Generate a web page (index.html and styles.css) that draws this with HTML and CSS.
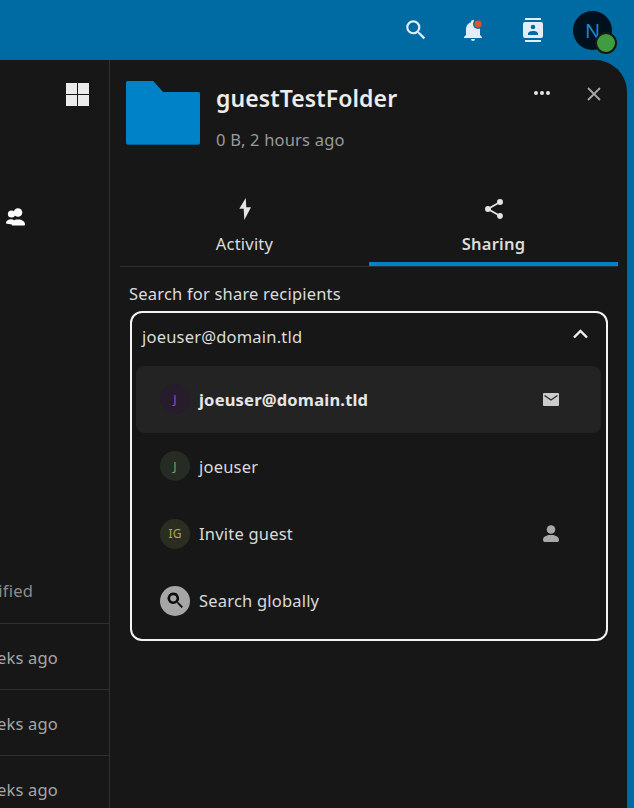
FILE: index.html
```html
<!DOCTYPE html>
<html lang="en">
<head>
<meta charset="utf-8">
<title>guestTestFolder</title>
<link rel="stylesheet" href="styles.css">
</head>
<body>
<header class="topbar">
  <svg class="icon-search" viewBox="0 0 24 24"><path d="M9.5,3A6.5,6.5 0 0,1 16,9.5C16,11.11 15.41,12.59 14.44,13.73L14.71,14H15.5L20.5,19L19,20.5L14,15.5V14.71L13.73,14.44C12.59,15.41 11.11,16 9.5,16A6.5,6.5 0 0,1 3,9.5A6.5,6.5 0 0,1 9.5,3M9.5,5C7,5 5,7 5,9.5C5,12 7,14 9.5,14C12,14 14,12 14,9.5C14,7 12,5 9.5,5Z"/></svg>
  <svg class="icon-bell" viewBox="0 0 24 24"><path d="M21,19V20H3V19L5,17V11C5,7.9 7.03,5.17 10,4.29C10,4.19 10,4.1 10,4A2,2 0 0,1 12,2A2,2 0 0,1 14,4C14,4.1 14,4.19 14,4.29C16.97,5.17 19,7.9 19,11V17L21,19M14,21A2,2 0 0,1 12,23A2,2 0 0,1 10,21"/><circle class="bell-gap" cx="17" cy="6" r="5"/><circle class="bell-dot" cx="17" cy="6" r="3.5"/></svg>
  <svg class="icon-contacts" viewBox="0 0 24 24"><path d="M20,0H4V2H20V0M4,24H20V22H4V24M20,4H4A2,2 0 0,0 2,6V18A2,2 0 0,0 4,20H20A2,2 0 0,0 22,18V6A2,2 0 0,0 20,4M12,6.75A2.25,2.25 0 0,1 14.25,9A2.25,2.25 0 0,1 12,11.25A2.25,2.25 0 0,1 9.75,9A2.25,2.25 0 0,1 12,6.75M17,17H7V15.5C7,13.83 10.33,13 12,13C13.67,13 17,13.83 17,15.5V17Z"/></svg>
  <div class="account">N<span class="status"></span></div>
</header>
<main class="panel">
  <section class="files">
    <div class="grid-toggle"><span></span><span></span><span></span><span></span></div>
    <div class="shared-mark">
      <svg viewBox="0 0 19 18"><circle cx="5.5" cy="6" r="3.6"/><path d="M0 15.5c0-3 2.5-3.6 4-4.2l3 .2 1.5 1.5v2.8c-3 .6-5.5.6-8.500-.3z"/><circle cx="12" cy="4.500" r="4.300"/><path d="M5.500 16.500c0-3.500 3-4.300 4.500-5h4c1.500.7 5 1.500 5 5 0 1-1 1-2 1H7.500c-1 0-2 0-2-1z"/></svg>
    </div>
    <div class="file-row file-head"><span>Modified</span></div>
    <div class="file-row"><span>3 weeks ago</span></div>
    <div class="file-row"><span>3 weeks ago</span></div>
    <div class="file-row"><span>3 weeks ago</span></div>
  </section>
  <aside class="sidebar">
    <div class="side-head">
      <svg class="folder" viewBox="0 0 74 64"><path class="folder-shade" d="M2 0h25l10 11h35a2 2 0 0 1 2 2v49a2 2 0 0 1-2 2H2a2 2 0 0 1-2-2V2a2 2 0 0 1 2-2z"/><path class="folder-fill" d="M2 0h25l10 11h35a2 2 0 0 1 2 2v48a2 2 0 0 1-2 2H2a2 2 0 0 1-2-2V2a2 2 0 0 1 2-2z"/></svg>
      <div class="side-title">
        <h1>guestTestFolder</h1>
        <p>0 B, 2 hours ago</p>
      </div>
      <svg class="icon-dots" viewBox="0 0 16 4"><circle cx="2" cy="2" r="2"/><circle cx="8" cy="2" r="2"/><circle cx="14" cy="2" r="2"/></svg>
      <svg class="icon-close" viewBox="0 0 14 14"><path d="M1 1l12 12M13 1L1 13"/></svg>
    </div>
    <nav class="tabs">
      <div class="tab">
        <svg viewBox="0 0 24 24"><path d="M12.700 1 6.300 11.700h4.400L11.300 23 18 10.300h-4.700z"/></svg>
        <span>Activity</span>
      </div>
      <div class="tab tab-active">
        <svg viewBox="0 0 24 24"><path d="M18,16.08C17.24,16.08 16.56,16.38 16.04,16.85L8.91,12.7C8.96,12.47 9,12.24 9,12C9,11.76 8.96,11.53 8.91,11.3L15.96,7.19C16.5,7.69 17.21,8 18,8A3,3 0 0,0 21,5A3,3 0 0,0 18,2A3,3 0 0,0 15,5C15,5.24 15.04,5.47 15.09,5.7L8.04,9.81C7.5,9.31 6.79,9 6,9A3,3 0 0,0 3,12A3,3 0 0,0 6,15C6.79,15 7.5,14.69 8.04,14.19L15.16,18.34C15.11,18.55 15.08,18.77 15.08,19C15.08,20.61 16.39,21.91 18,21.91C19.61,21.91 20.92,20.61 20.92,19A2.92,2.92 0 0,0 18,16.08Z"/></svg>
        <span>Sharing</span>
      </div>
    </nav>
    <div class="sharing">
      <label class="search-label">Search for share recipients</label>
      <div class="combo">
        <div class="combo-input">
          <span>joeuser@domain.tld</span>
          <svg class="chevron" viewBox="0 0 15 10"><path d="M1 8.500l6.500-6.500 6.500 6.500"/></svg>
        </div>
        <ul class="options">
          <li class="option option-active">
            <span class="avatar avatar-purple">J</span>
            <span class="option-text">joeuser@domain.tld</span>
            <svg class="option-icon icon-mail" viewBox="0 0 16 13"><rect width="16" height="13" rx="1"/><path d="M1.500 2.500 8 7l6.500-4.500"/></svg>
          </li>
          <li class="option">
            <span class="avatar avatar-green">J</span>
            <span class="option-text">joeuser</span>
          </li>
          <li class="option">
            <span class="avatar avatar-olive">IG</span>
            <span class="option-text">Invite guest</span>
            <svg class="option-icon icon-person" viewBox="0 0 16 17"><circle cx="8" cy="4.500" r="4.300"/><path d="M0 15c0-3.500 3.500-4.200 5.500-5h5c2 .8 5.500 1.500 5.500 5 0 1.500-1 2-2 2H2c-1 0-2-.5-2-2z"/></svg>
          </li>
          <li class="option">
            <span class="avatar avatar-search">
              <svg viewBox="0 0 24 24"><path d="M9.500 3a6.500 6.500 0 0 1 5 10.700l.2.300h.8l5 5-1.500 1.500-5-5v-.8l-.3-.3A6.500 6.500 0 1 1 9.500 3zm0 2.900a3.600 3.600 0 1 0 0 7.200 3.600 3.600 0 0 0 0-7.200z"/></svg>
            </span>
            <span class="option-text">Search globally</span>
          </li>
        </ul>
      </div>
    </div>
  </aside>
</main>
</body>
</html>
```
FILE: styles.css
```css
* { box-sizing: border-box; }
html, body { margin: 0; height: 100%; }
body {
  width: 634px;
  height: 808px;
  overflow: hidden;
  background: #006aa3;
  font-family: "Noto Sans", sans-serif;
  font-size: 16.500px;
  letter-spacing: 0.2px;
  color: #dcdcdc;
  display: flex;
  flex-direction: column;
}
.topbar {
  height: 60px;
  flex: none;
  display: flex;
  align-items: center;
  justify-content: flex-end;
  padding-right: 22px;
}
.topbar svg { fill: #e2eef6; display: block; }
.icon-search { width: 26px; height: 26px; margin-right: 32px; }
.icon-bell { width: 24px; height: 24px; margin-right: 36px; }
.icon-contacts { width: 24px; height: 24px; margin-right: 28px; }
.topbar .bell-gap { fill: #006aa3; }
.topbar .bell-dot { fill: #e9502a; }
.account {
  position: relative;
  width: 39px;
  height: 39px;
  border-radius: 50%;
  background: #00101c;
  color: #1789d0;
  font-size: 20px;
  letter-spacing: 0;
  display: flex;
  align-items: center;
  justify-content: center;
}
.status {
  position: absolute;
  left: 22px;
  top: 21px;
  width: 22px;
  height: 22px;
  border-radius: 50%;
  background: #3f9d3f;
  border: 2px solid #171717;
}
.panel {
  flex: 1;
  min-height: 0;
  width: 627px;
  background: #171717;
  border-top-right-radius: 32px;
  display: flex;
}
.files {
  width: 110px;
  flex: none;
  border-right: 1px solid #2f2f2f;
  display: flex;
  flex-direction: column;
  overflow: hidden;
}
.grid-toggle {
  margin: 23px 0 0 66px;
  display: grid;
  grid-template-columns: 11px 11px;
  grid-auto-rows: 11px;
  gap: 1px;
}
.grid-toggle span { background: #ececec; }
.shared-mark { margin: 102px 0 0 6px; height: 18px; }
.shared-mark svg { width: 19px; height: 18px; fill: #fff; display: block; }
.file-row {
  height: 66px;
  flex: none;
  display: flex;
  justify-content: flex-end;
  align-items: center;
  white-space: nowrap;
  padding: 2px 51px 0 0;
  color: #a6a6a6;
  border-bottom: 1px solid #2f2f2f;
}
.file-row span { flex: none; }
.file-head {
  height: 66px;
  margin-top: 332px;
  padding: 0 76px 0 0;
  color: #8c8c8c;
}
.sidebar {
  flex: 1;
  min-width: 0;
  display: flex;
  flex-direction: column;
}
.side-head {
  height: 130px;
  flex: none;
  padding: 21px 0 0 16px;
  display: flex;
  align-items: flex-start;
}
.folder { width: 74px; height: 64px; flex: none; display: block; }
.folder-fill { fill: #0082c9; }
.folder-shade { fill: #005f94; }
.side-title { margin-left: 16px; flex: 1; }
.side-title h1 {
  margin: 0;
  font-size: 23px;
  font-weight: 600;
  line-height: 34px;
  letter-spacing: 0.1px;
  color: #ececec;
}
.side-title p {
  margin: 13px 0 0;
  line-height: 24px;
  color: #9a9a9a;
}
.icon-dots { width: 16px; height: 4px; fill: #e6e6e6; margin: 10px 37px 0 0; flex: none; }
.icon-close { width: 14px; height: 14px; margin: 6px 26px 0 0; flex: none; fill: none; stroke: #a8a8a8; stroke-width: 1.800; }
.tabs {
  margin: 0 9px 0 10px;
  height: 77px;
  flex: none;
  display: grid;
  grid-template-columns: 1fr 1fr;
  border-bottom: 1px solid #2f2f2f;
}
.tab {
  display: flex;
  flex-direction: column;
  align-items: center;
  padding-top: 7px;
  height: 76px;
}
.tab svg { width: 24px; height: 24px; fill: #e4e4e4; display: block; }
.tab span { margin-top: 12px; line-height: 22px; }
.tab-active { border-bottom: 4px solid #0082c9; font-weight: 600; }
.sharing { padding: 15px 0 0 19px; }
.search-label { display: block; line-height: 24px; }
.combo {
  margin: 5px 0 0 1px;
  width: 478px;
  height: 330px;
  border: 2px solid #f4f4f4;
  border-radius: 12px;
}
.combo-input {
  height: 53px;
  padding: 0 18px 7px 10px;
  display: flex;
  align-items: center;
  justify-content: space-between;
}
.chevron { width: 15px; height: 10px; fill: none; stroke: #f0f0f0; stroke-width: 2.400; margin-bottom: 4px; }
.options { list-style: none; margin: 0 5px 0 4px; padding: 0; }
.option {
  height: 67.250px;
  padding: 0 42px 1px 24px;
  border-radius: 8px;
  display: flex;
  align-items: center;
  color: #dadada;
}
.option-active { background: #232323; }
.option-active .option-text { font-weight: 700; color: #e6e6e6; }
.avatar {
  width: 30px;
  height: 30px;
  flex: none;
  border-radius: 50%;
  display: flex;
  align-items: center;
  justify-content: center;
  font-size: 12px;
  letter-spacing: 0;
}
.avatar-purple { background: #271c2b; color: #a04fae; }
.avatar-green { background: #262b24; color: #7fa866; }
.avatar-olive { background: #2b2d20; color: #a8ad4e; }
.avatar-search { background: #a6a6a6; }
.avatar-search svg { width: 21px; height: 21px; fill: #0b0b0b; display: block; }
.option-text { margin-left: 9px; flex: 1; }
.option-icon { width: 16px; flex: none; display: block; }
.icon-mail { height: 13px; }
.icon-mail rect { fill: #cbcbcb; }
.icon-mail path { fill: none; stroke: #2a2a2a; stroke-width: 1.300; }
.icon-person { height: 17px; fill: #a8a8a8; }
```
